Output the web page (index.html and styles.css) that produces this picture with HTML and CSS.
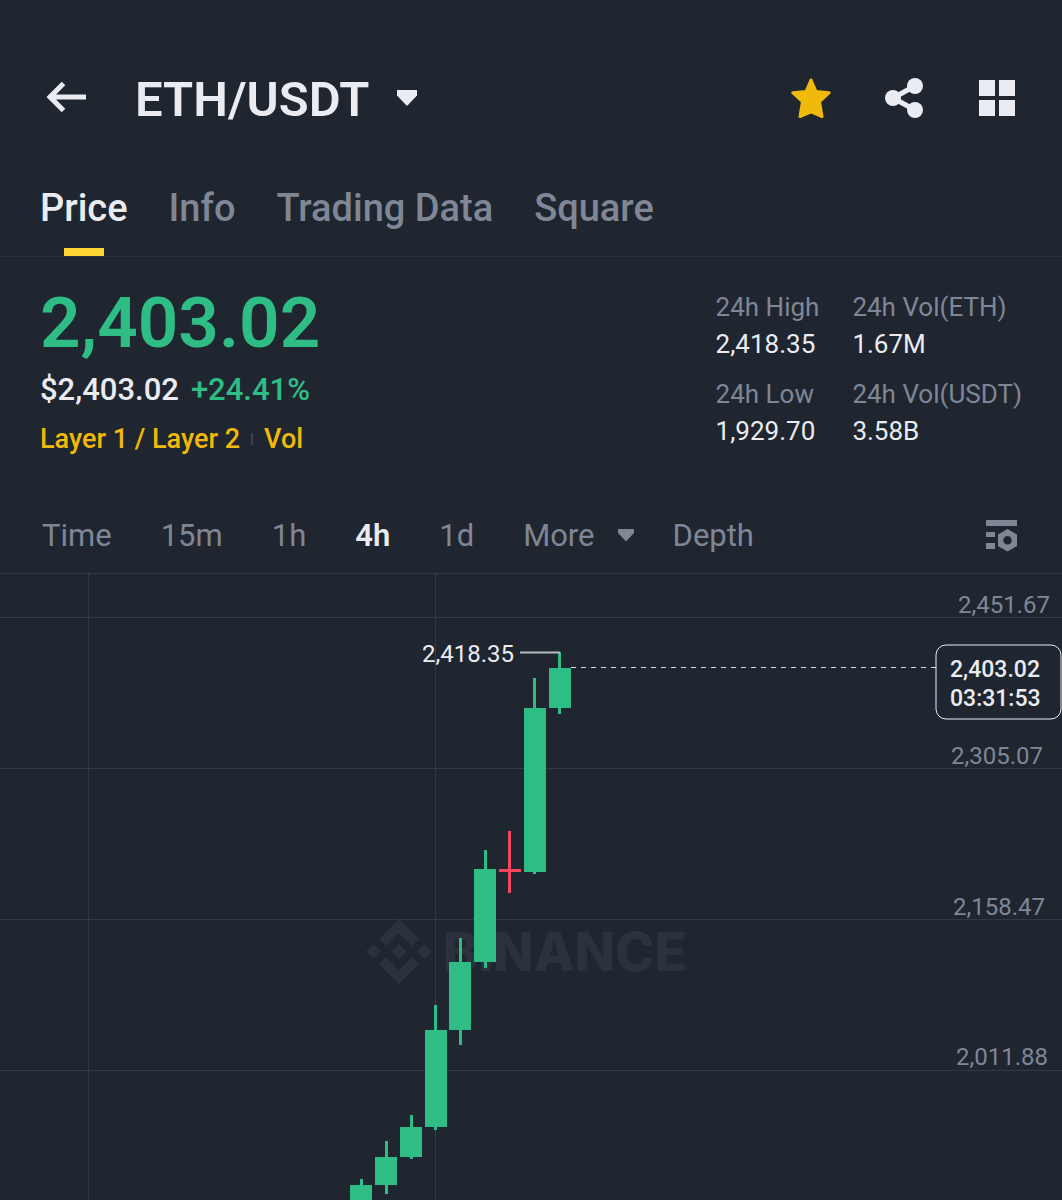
FILE: index.html
```html
<!DOCTYPE html>
<html lang="en">
<head>
<meta charset="utf-8">
<meta name="viewport" content="width=device-width, initial-scale=1">
<title>ETH/USDT</title>
<link rel="stylesheet" href="styles.css">
</head>
<body>
<header class="topbar">
  <button class="icon-button" aria-label="Back">
    <svg width="40" height="32" viewBox="0 0 40 32" fill="none" stroke="currentColor" stroke-width="5"><path d="M17.500 1.500 4 15l13.500 13.500M4 15h36"/></svg>
  </button>
  <button class="pair">
    <span class="pair-name">ETH/USDT</span>
    <svg width="20" height="16" viewBox="0 0 20 16" fill="currentColor"><path d="M0 0h20v5.500L10.500 15.500h-1L0 5.500z"/></svg>
  </button>
  <div class="actions">
    <button class="icon-button star" aria-label="Favorite">
      <svg width="40" height="40" viewBox="0 0 40 40" fill="currentColor" stroke="currentColor" stroke-width="3" stroke-linejoin="round"><path d="m20 2 5 11.500 13.200 1.200-9.700 8.900 2.500 14.900L20 33.800 9 38.500l2.500-14.900-9.700-8.900L15 13.500z"/></svg>
    </button>
    <button class="icon-button" aria-label="Share">
      <svg width="40" height="40" viewBox="0 0 40 40" fill="currentColor"><path d="M8 20 30 8M8 20l22 12" stroke="currentColor" stroke-width="5"/><circle cx="8" cy="20" r="8"/><circle cx="30" cy="8" r="8"/><circle cx="30" cy="32" r="8"/></svg>
    </button>
    <button class="icon-button" aria-label="Layout">
      <svg width="36" height="36" viewBox="0 0 36 36" fill="currentColor"><path d="M0 0h16v16H0zM20 0h16v16H20zM0 20h16v16H0zM20 20h16v16H20z"/></svg>
    </button>
  </div>
</header>

<nav class="tabs">
  <a class="tab tab-active" href="#price">Price</a>
  <a class="tab" href="#info">Info</a>
  <a class="tab" href="#data">Trading Data</a>
  <a class="tab" href="#square">Square</a>
</nav>

<main>
  <section class="ticker">
    <div class="quote">
      <div class="last-price">2,403.02</div>
      <div class="fiat"><span>$2,403.02</span><span class="up">+24.41%</span></div>
      <div class="tags"><a href="#layers">Layer 1 / Layer 2</a><span class="tag-divider"></span><a href="#vol">Vol</a></div>
    </div>
    <dl class="stats">
      <div class="stat"><dt>24h High</dt><dd>2,418.35</dd></div>
      <div class="stat"><dt>24h Vol(ETH)</dt><dd>1.67M</dd></div>
      <div class="stat"><dt>24h Low</dt><dd>1,929.70</dd></div>
      <div class="stat"><dt>24h Vol(USDT)</dt><dd>3.58B</dd></div>
    </dl>
  </section>

  <div class="intervals">
    <button class="interval">Time</button>
    <button class="interval">15m</button>
    <button class="interval">1h</button>
    <button class="interval interval-active">4h</button>
    <button class="interval">1d</button>
    <button class="interval interval-more"><span>More</span>
      <svg width="18" height="14" viewBox="0 0 18 14" fill="currentColor"><path d="M1 0h16v4L9.500 12h-1L1 4z"/></svg>
    </button>
    <button class="interval">Depth</button>
    <button class="icon-button chart-settings" aria-label="Chart settings">
      <svg width="32" height="32" viewBox="0 0 32 32" fill="currentColor"><path d="M0 0h31v6H0zM0 12h9v5H0zM0 23h9v6H0z"/><path fill-rule="evenodd" d="M21.500 9l9.500 5.500v11.500l-9.500 5.500-9.500-5.500V14.500zM21.500 16a4 4 0 1 0 0 8.500 4 4 0 0 0 0-8.500z"/></svg>
    </button>
  </div>

  <svg class="chart" viewBox="0 0 1062 626" role="img" aria-label="ETH/USDT 4h candles">
    <path class="grid" d="M0 43.500h1062M0 194.500h1062M0 345.500h1062M0 496.500h1062M88.500 0v626M435.500 0v626"/>
    <g class="watermark">
      <path d="M399 345l20 20-7 7-13-13-13 13-7-7zM399 410l20-20-7-7-13 13-13-13-7 7zM399 370l7.500 7.500-7.500 7.500-7.500-7.500zM373.500 370l7.500 7.500-7.500 7.500-7.500-7.500zM424.500 370l7.500 7.500-7.500 7.500-7.500-7.500z"/>
      <text x="443" y="397">BINANCE</text>
    </g>
    <g class="axis">
      <text x="1050" y="39">2,451.67</text>
      <text x="1043" y="190">2,305.07</text>
      <text x="1045" y="341">2,158.47</text>
      <text x="1048" y="491">2,011.88</text>
    </g>
    <g class="candle-up">
      <path d="M350 611h22v15h-22zM360 605h3v6h-3z"/>
      <path d="M375 583h22v28h-22zM385 567h3v53h-3z"/>
      <path d="M400 553h22v30h-22zM410 541h3v44h-3z"/>
      <path d="M425 456h22v97h-22zM434 431h3v125h-3z"/>
      <path d="M449 388h22v68h-22zM459 364h3v107h-3z"/>
      <path d="M474 295h22v93h-22zM484 276h3v118h-3z"/>
      <path d="M524 134h22v164h-22zM533 104h3v196h-3z"/>
      <path d="M549 94h22v40h-22zM558 78h3v62h-3z"/>
    </g>
    <path class="candle-down" d="M499 295h22v3h-22zM508 257h3v62h-3z"/>
    <path class="marker-line" d="M520 78.500h40"/>
    <text class="marker" x="514" y="88">2,418.35</text>
    <path class="price-line" d="M571 93.500h365"/>
    <rect class="price-tag" x="936" y="71" width="125" height="74" rx="10"/>
    <g class="price-tag-text">
      <text x="950" y="103">2,403.02</text>
      <text x="950" y="132">03:31:53</text>
    </g>
  </svg>
</main>
</body>
</html>
```
FILE: styles.css
```css
* { box-sizing: border-box; }

body {
  margin: 0;
  background: #202630;
  color: #eaecf2;
  font-family: Roboto, "Liberation Sans", sans-serif;
}

button {
  margin: 0;
  padding: 0;
  border: 0;
  background: none;
  color: inherit;
  font: inherit;
  cursor: pointer;
}

a { color: inherit; text-decoration: none; }
svg { display: block; }

.topbar {
  display: flex;
  align-items: center;
  padding: 50px 47px 0 46px;
}

.pair {
  display: flex;
  align-items: center;
  gap: 28px;
  height: 96px;
  margin-left: 49px;
  font-size: 49px;
  font-weight: 600;
  line-height: 56px;
}

.pair-name { padding-top: 4px; }

.actions {
  display: flex;
  align-items: center;
  gap: 54px;
  margin-left: auto;
}

.star { color: #f0b90b; }

.tabs {
  display: flex;
  gap: 41px;
  padding: 40px 40px 0;
  border-bottom: 1px solid #2d333d;
  color: #7f8696;
  font-size: 38px;
  font-weight: 500;
  line-height: 44px;
}

.tab { padding-bottom: 26px; }

.tab-active {
  background: linear-gradient(#fcd535, #fcd535) bottom center / 40px 8px no-repeat;
  color: #eaecf2;
}

.ticker {
  display: flex;
  justify-content: space-between;
  padding: 30px 40px 61px;
}

.last-price {
  color: #2ebd85;
  font-size: 71px;
  font-weight: 600;
  line-height: 72px;
}

.fiat {
  display: flex;
  gap: 12px;
  margin-top: 11px;
  font-size: 31px;
  font-weight: 500;
  line-height: 40px;
}

.up { color: #2ebd85; }

.tags {
  display: flex;
  align-items: center;
  gap: 11px;
  margin-top: 13px;
  color: #f0b90b;
  font-size: 27px;
  font-weight: 500;
  line-height: 32px;
}

.tag-divider {
  width: 2px;
  height: 12px;
  background: #3a414d;
}

.stats {
  display: grid;
  grid-template-columns: auto auto;
  gap: 13px 33px;
  align-content: start;
  margin: 2px 0 0;
  font-size: 26px;
}

.stat dt { color: #7f8696; line-height: 36px; }
.stat dd { margin: 0; line-height: 38px; }

.intervals {
  display: flex;
  align-items: center;
  gap: 49px;
  padding: 0 44px 17px 42px;
  border-bottom: 1px solid #333943;
  color: #7f8696;
  font-size: 31px;
  line-height: 40px;
}

.interval-active { color: #eaecf2; font-weight: 600; }
.interval-more { display: flex; align-items: center; gap: 22px; margin-right: -11px; }
.chart-settings { margin-left: auto; }

.chart { width: 100%; height: auto; font-size: 24px; }
.grid { fill: none; stroke: #343a44; }
.watermark { fill: #2c323d; font: 800 53px Inter, sans-serif; }
.axis { fill: #7f8696; text-anchor: end; }
.candle-up { fill: #2ebd85; }
.candle-down { fill: #f6465d; }
.marker { fill: #eaecf2; text-anchor: end; }
.marker-line { stroke: #b7bac1; stroke-width: 2; }
.price-line { stroke: #d5d8de; stroke-width: 1; stroke-dasharray: 5 5; }
.price-tag { fill: #202630; stroke: #eaecf2; stroke-width: 1; }
.price-tag-text { fill: #eaecf2; font-size: 23px; font-weight: 500; }
```
